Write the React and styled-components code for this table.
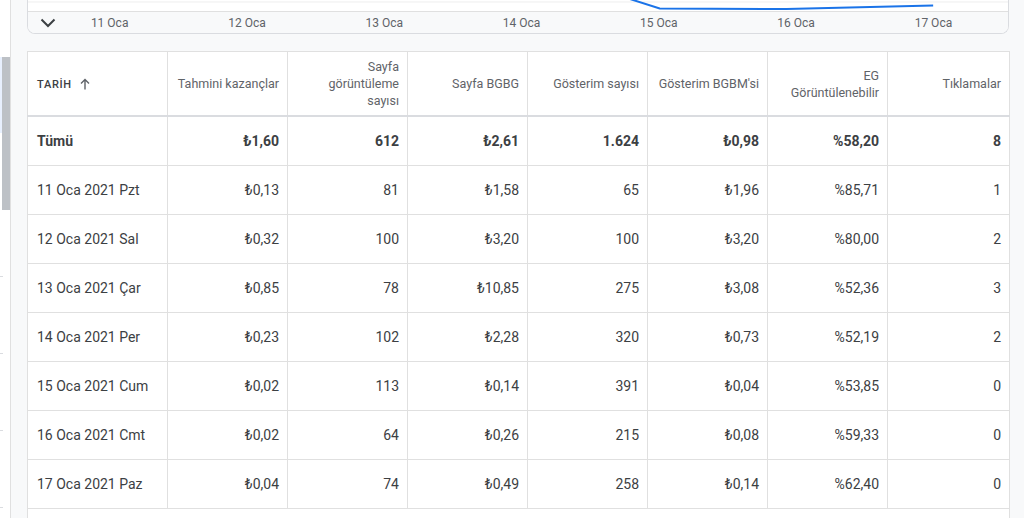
import React from "react";
import styled, { createGlobalStyle } from "styled-components";

const GlobalStyle = createGlobalStyle`
  html, body {
    margin: 0;
    padding: 0;
    background: #f8f9fa;
    font-family: Roboto, "Liberation Sans", Arial, sans-serif;
    -webkit-font-smoothing: antialiased;
  }
  #root {
    height: 518px;
    overflow: hidden;
  }
`;

const columns = [
  { key: "date", label: "TARİH", width: 140 },
  { key: "earn", label: "Tahmini kazançlar", width: 120 },
  { key: "views", label: "Sayfa görüntüleme sayısı", width: 120, wrap: 96 },
  { key: "rpm", label: "Sayfa BGBG", width: 120 },
  { key: "impr", label: "Gösterim sayısı", width: 120 },
  { key: "irpm", label: "Gösterim BGBM'si", width: 120 },
  { key: "view", label: "EG Görüntülenebilir", width: 120, wrap: 96 },
  { key: "clicks", label: "Tıklamalar", width: 122 },
];

const total = ["Tümü", "₺1,60", "612", "₺2,61", "1.624", "₺0,98", "%58,20", "8"];

const rows = [
  ["11 Oca 2021 Pzt", "₺0,13", "81", "₺1,58", "65", "₺1,96", "%85,71", "1"],
  ["12 Oca 2021 Sal", "₺0,32", "100", "₺3,20", "100", "₺3,20", "%80,00", "2"],
  ["13 Oca 2021 Çar", "₺0,85", "78", "₺10,85", "275", "₺3,08", "%52,36", "3"],
  ["14 Oca 2021 Per", "₺0,23", "102", "₺2,28", "320", "₺0,73", "%52,19", "2"],
  ["15 Oca 2021 Cum", "₺0,02", "113", "₺0,14", "391", "₺0,04", "%53,85", "0"],
  ["16 Oca 2021 Cmt", "₺0,02", "64", "₺0,26", "215", "₺0,08", "%59,33", "0"],
  ["17 Oca 2021 Paz", "₺0,04", "74", "₺0,49", "258", "₺0,14", "%62,40", "0"],
];

const axisLabels = ["11 Oca", "12 Oca", "13 Oca", "14 Oca", "15 Oca", "16 Oca", "17 Oca"];

const Page = styled.div`
  display: flex;
  height: 518px;
  overflow: hidden;
`;

const Sidebar = styled.div`
  width: 10px;
  flex-shrink: 0;
  background: #fff;
  border-right: 1px solid #e0e0e0;
  display: flex;
  flex-direction: column;
`;

const ScrollTrack = styled.div`
  margin-top: 57px;
  height: 153px;
  flex-shrink: 0;
  display: flex;
  justify-content: flex-end;
  background: linear-gradient(to bottom, #e8f0fe 0 76px, #fff 76px);
`;

const ScrollThumb = styled.div`
  width: 8px;
  background: #bdc1c6;
`;

const Tick = styled.div`
  width: 3px;
  height: 1px;
  flex-shrink: 0;
  background: #dadce0;
  margin-top: ${(p) => p.gap}px;
`;

const Main = styled.div`
  flex: 1;
  padding: 0 15px 0 16px;
  display: flex;
  flex-direction: column;
  gap: 17px;
  min-width: 0;
  & > * {
    flex-shrink: 0;
  }
`;

const ChartCard = styled.div`
  background: #fff;
  border: 1px solid #dadce0;
  border-top: none;
  border-radius: 0 0 8px 8px;
  overflow: hidden;
`;

const PlotArea = styled.div`
  height: 11px;
  border-bottom: 1px solid #e0e0e0;
`;

const PlotSvg = styled.svg`
  display: block;
  width: 100%;
  height: 11px;
`;

const AxisStrip = styled.div`
  height: 21px;
  background: #f8f9fa;
  display: flex;
  align-items: center;
  font-size: 12px;
  color: #5f6368;
`;

const ToggleButton = styled.div`
  width: 40px;
  display: flex;
  justify-content: center;
  color: #3c4043;
`;

const AxisLabels = styled.div`
  display: flex;
  margin-left: -27px;
`;

const AxisLabel = styled.span`
  width: 137.3px;
  text-align: center;
`;

const TableBox = styled.div`
  background: #fff;
`;

const Table = styled.table`
  border-collapse: collapse;
  table-layout: fixed;
  width: 982px;
  font-size: 14px;
  color: #3c4043;
`;

const HeadCell = styled.th`
  height: 63px;
  padding: 0 8px 0 9px;
  border: 1px solid #e0e0e0;
  border-bottom: 2px solid #dadce0;
  font-size: 12.5px;
  font-weight: 400;
  line-height: 17px;
  color: #5f6368;
  text-align: ${(p) => (p.left ? "left" : "right")};
  vertical-align: middle;
`;

const HeadLabel = styled.span`
  display: inline-block;
  max-width: ${(p) => (p.wrap ? `${p.wrap}px` : "none")};
`;

const SortLabel = styled.span`
  display: inline-flex;
  align-items: center;
  gap: 8px;
  font-size: 11px;
  letter-spacing: 0.7px;
  color: #3c4043;
  font-weight: 500;
`;

const Cell = styled.td`
  height: 48px;
  padding: 0 8px 0 9px;
  border: 1px solid #e0e0e0;
  text-align: ${(p) => (p.left ? "left" : "right")};
  font-weight: ${(p) => (p.bold ? 700 : 400)};
  color: #3c4043;
  white-space: nowrap;
`;

const FooterCell = styled.td`
  height: 40px;
  border: 1px solid #e0e0e0;
`;

const ChevronDown = () => (
  <svg width="16" height="10" viewBox="0 0 16 10" fill="none">
    <path d="M1.5 1.5 L8 8 L14.5 1.5" stroke="#3c4043" strokeWidth="2" />
  </svg>
);

const ArrowUp = () => (
  <svg width="10" height="12" viewBox="0 0 10 12" fill="none">
    <path d="M5 11.5 V1.5 M1 5.5 L5 1.5 L9 5.5" stroke="#5f6368" strokeWidth="1.4" />
  </svg>
);

const App = () => {
  return (
    <>
      <GlobalStyle />
      <Page>
        <Sidebar>
          <ScrollTrack>
            <ScrollThumb />
          </ScrollTrack>
          <Tick gap={66} />
          <Tick gap={76} />
          <Tick gap={76} />
          <Tick gap={76} />
        </Sidebar>
        <Main>
          <ChartCard>
            <PlotArea>
              <PlotSvg viewBox="0 0 982 11" preserveAspectRatio="none">
                <line x1="0" y1="2" x2="982" y2="2" stroke="#eeeeee" strokeWidth="1" />
                <polyline
                  points="600,-2 633,8.5 760,9 907,5.5"
                  fill="none"
                  stroke="#1a73e8"
                  strokeWidth="2"
                />
              </PlotSvg>
            </PlotArea>
            <AxisStrip>
              <ToggleButton>
                <ChevronDown />
              </ToggleButton>
              <AxisLabels>
                {axisLabels.map((l) => (
                  <AxisLabel key={l}>{l}</AxisLabel>
                ))}
              </AxisLabels>
            </AxisStrip>
          </ChartCard>
          <TableBox>
            <Table>
              <colgroup>
                {columns.map((c) => (
                  <col key={c.key} style={{ width: c.width }} />
                ))}
              </colgroup>
              <thead>
                <tr>
                  {columns.map((c, i) =>
                    i === 0 ? (
                      <HeadCell key={c.key} left>
                        <SortLabel>
                          {c.label}
                          <ArrowUp />
                        </SortLabel>
                      </HeadCell>
                    ) : (
                      <HeadCell key={c.key}>
                        <HeadLabel wrap={c.wrap}>{c.label}</HeadLabel>
                      </HeadCell>
                    )
                  )}
                </tr>
              </thead>
              <tbody>
                <tr>
                  {total.map((v, i) => (
                    <Cell key={i} left={i === 0} bold>
                      {v}
                    </Cell>
                  ))}
                </tr>
                {rows.map((r, ri) => (
                  <tr key={ri}>
                    {r.map((v, i) => (
                      <Cell key={i} left={i === 0}>
                        {v}
                      </Cell>
                    ))}
                  </tr>
                ))}
                <tr>
                  <FooterCell colSpan={8} />
                </tr>
              </tbody>
            </Table>
          </TableBox>
        </Main>
      </Page>
    </>
  );
};

export default App;
